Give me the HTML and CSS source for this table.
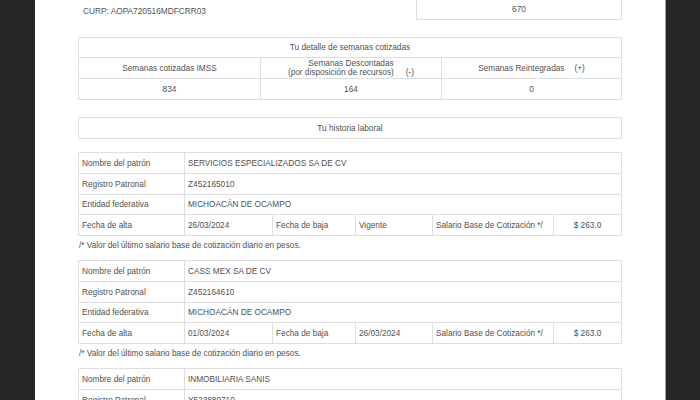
FILE: index.html
```html
<!DOCTYPE html>
<html lang="es">
<head>
<meta charset="utf-8">
<title>Semanas cotizadas</title>
<link rel="stylesheet" href="styles.css">
</head>
<body>
<div class="page">
  <div class="top">
    <div class="curp">CURP: AOPA720516MDFCRR03</div>
    <div class="topbox">670</div>
  </div>

  <div class="tbl semanas">
    <div class="row r19"><div class="cell grow center">Tu detalle de semanas cotizadas</div></div>
    <div class="row">
      <div class="cell w183 center">Semanas cotizadas IMSS</div>
      <div class="cell w181 center two"><div class="twotext">Semanas Descontadas<br>(por disposición de recursos)<span class="sign">(-)</span></div></div>
      <div class="cell grow center"><span>Semanas Reintegradas<span class="sign s2">(+)</span></span></div>
    </div>
    <div class="row">
      <div class="cell w183 center">834</div>
      <div class="cell w181 center">164</div>
      <div class="cell grow center">0</div>
    </div>
  </div>

  <div class="tbl hist">
    <div class="row"><div class="cell grow center">Tu historia laboral</div></div>
  </div>

  <div class="tbl emp first">
    <div class="row"><div class="cell w106">Nombre del patrón</div><div class="cell grow">SERVICIOS ESPECIALIZADOS SA DE CV</div></div>
    <div class="row"><div class="cell w106">Registro Patronal</div><div class="cell grow">Z452165010</div></div>
    <div class="row r19"><div class="cell w106">Entidad federativa</div><div class="cell grow">MICHOACÁN DE OCAMPO</div></div>
    <div class="row">
      <div class="cell w106">Fecha de alta</div>
      <div class="cell w88">26/03/2024</div>
      <div class="cell w83">Fecha de baja</div>
      <div class="cell w77">Vigente</div>
      <div class="cell w121">Salario Base de Cotización */</div>
      <div class="cell grow center">$ 263.0</div>
    </div>
  </div>
  <p class="note">/* Valor del último salario base de cotización diario en pesos.</p>

  <div class="tbl emp">
    <div class="row"><div class="cell w106">Nombre del patrón</div><div class="cell grow">CASS MEX SA DE CV</div></div>
    <div class="row"><div class="cell w106">Registro Patronal</div><div class="cell grow">Z452164610</div></div>
    <div class="row r19"><div class="cell w106">Entidad federativa</div><div class="cell grow">MICHOACÁN DE OCAMPO</div></div>
    <div class="row">
      <div class="cell w106">Fecha de alta</div>
      <div class="cell w88">01/03/2024</div>
      <div class="cell w83">Fecha de baja</div>
      <div class="cell w77">26/03/2024</div>
      <div class="cell w121">Salario Base de Cotización */</div>
      <div class="cell grow center">$ 263.0</div>
    </div>
  </div>
  <p class="note">/* Valor del último salario base de cotización diario en pesos.</p>

  <div class="tbl emp">
    <div class="row"><div class="cell w106">Nombre del patrón</div><div class="cell grow">INMOBILIARIA SANIS</div></div>
    <div class="row"><div class="cell w106">Registro Patronal</div><div class="cell grow">Y523880710</div></div>
    <div class="row r19"><div class="cell w106">Entidad federativa</div><div class="cell grow">MICHOACÁN DE OCAMPO</div></div>
  </div>
</div>
</body>
</html>
```

FILE: styles.css
```css
html, body {
  margin: 0;
  padding: 0;
  background: #262626;
  height: 400px;
  overflow: hidden;
}
.page {
  margin-left: 35px;
  width: 587px;
  height: 400px;
  background: #ffffff;
  border-right: 1px solid #9c9c9c;
  padding-left: 43px;
  font-family: "Liberation Sans", Arial, sans-serif;
  font-size: 8.25px;
  color: #505050;
  overflow: hidden;
}
.top {
  display: flex;
  width: 544px;
  height: 20px;
}
.curp {
  padding-left: 5px;
  padding-top: 1px;
  line-height: 20px;
  font-size: 8.3px;
}
.topbox {
  margin-left: auto;
  width: 206px;
  height: 20px;
  box-sizing: border-box;
  border: 1px solid #dedede;
  border-top: none;
  display: flex;
  align-items: center;
  justify-content: center;
}
.tbl {
  width: 544px;
  box-sizing: border-box;
  border: 1px solid #dedede;
  border-bottom: none;
}
.semanas { margin-top: 17px; }
.hist { margin-top: 17px; }
.emp.first { margin-top: 13px; }
.row {
  display: flex;
  height: 20px;
  border-bottom: 1px solid #dedede;
}
.row.r19 { height: 19px; }
.cell {
  display: flex;
  align-items: center;
  box-sizing: border-box;
  padding: 0 3px;
  border-right: 1px solid #dedede;
  white-space: nowrap;
}
.cell:last-child { border-right: none; }
.cell.center { justify-content: center; text-align: center; }
.twotext { line-height: 8.6px; padding-top: 1px; text-align: center; }
.grow { flex: 1; }
.w183 { width: 182px; }
.w181 { width: 181px; }
.w106 { width: 106px; }
.w88 { width: 88px; }
.w83 { width: 83px; }
.w77 { width: 77px; }
.w121 { width: 121px; }
.sign { margin-left: 12px; }
.sign.s2 { margin-left: 10px; }
.note {
  margin: 0 0 8px 0;
  padding: 4px 0 0 1px;
  line-height: 12px;
}
```
